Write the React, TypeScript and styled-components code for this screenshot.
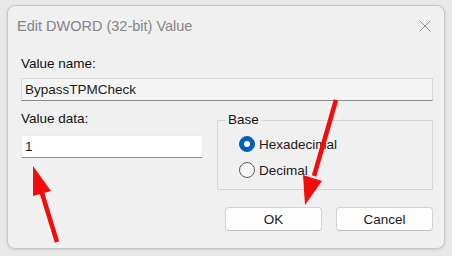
import React from "react";
import styled, { createGlobalStyle } from "styled-components";

const GlobalStyle = createGlobalStyle`
  html, body {
    margin: 0;
    padding: 0;
    background: #e8e8e8;
  }
  body {
    font-family: "Liberation Sans", Arial, sans-serif;
    font-size: 13.5px;
    color: #1a1a1a;
  }
`;

const Screen = styled.div`
  position: relative;
  width: 452px;
  height: 256px;
  box-sizing: border-box;
  padding: 5px 7px 7px 7px;
  overflow: hidden;
`;

const Dialog = styled.div`
  width: 438px;
  height: 244px;
  box-sizing: border-box;
  border: 1px solid #c6c6c6;
  border-radius: 8px;
  background: #f0f0f0;
  box-shadow: 0 1px 3px rgba(0, 0, 0, 0.12);
  display: flex;
  flex-direction: column;
`;

const TitleBar = styled.div`
  height: 40px;
  display: flex;
  align-items: center;
  justify-content: space-between;
  padding: 0 13px 0 9px;
`;

const Title = styled.span`
  color: #858585;
  font-size: 14.5px;
`;

const CloseButton = styled.div`
  width: 12px;
  height: 12px;
  display: flex;
`;

const Body = styled.div`
  padding: 9px 11px 0 13px;
  display: flex;
  flex-direction: column;
`;

const Label = styled.div`
  line-height: 18px;
  color: #111;
`;

const TextField = styled.div<{ $readOnly?: boolean }>`
  height: 23px;
  box-sizing: border-box;
  margin-top: ${(p) => (p.$readOnly ? "5px" : "7px")};
  padding: 0 3px;
  display: flex;
  align-items: center;
  background: ${(p) => (p.$readOnly ? "#f4f4f4" : "#ffffff")};
  border: 1px solid ${(p) => (p.$readOnly ? "#dadada" : "#ececec")};
  border-bottom: 1px solid #8a8a8a;
  color: #1b1b1b;
`;

const Row = styled.div`
  margin-top: 9px;
  display: grid;
  grid-template-columns: 182px 216px;
  column-gap: 14px;
`;

const Column = styled.div`
  display: flex;
  flex-direction: column;
`;

const GroupBox = styled.fieldset`
  margin: 2px 0 0 0;
  padding: 7px 0 0 21px;
  height: 78px;
  box-sizing: border-box;
  border: 1px solid #d6d6d6;
  border-radius: 1px;
  display: flex;
  flex-direction: column;
  gap: 8px;
`;

const Legend = styled.legend`
  padding: 0 2px;
  margin-left: -13px;
  line-height: 16px;
  color: #111;
`;

const RadioRow = styled.div`
  display: flex;
  align-items: center;
  gap: 4px;
  height: 18px;
`;

const RadioCircle = styled.span<{ $checked?: boolean }>`
  width: 16px;
  height: 16px;
  box-sizing: border-box;
  border-radius: 50%;
  display: flex;
  align-items: center;
  justify-content: center;
  background: ${(p) => (p.$checked ? "#005fb8" : "#f6f6f6")};
  border: 1px solid ${(p) => (p.$checked ? "#005fb8" : "#5c5c5c")};
`;

const RadioDot = styled.span`
  width: 6px;
  height: 6px;
  border-radius: 50%;
  background: #ffffff;
`;

const ButtonBar = styled.div`
  margin-top: 17px;
  display: flex;
  justify-content: flex-end;
  gap: 14px;
`;

const Button = styled.div`
  width: 97px;
  height: 24px;
  box-sizing: border-box;
  border: 1px solid #d3d3d3;
  border-bottom-color: #bcbcbc;
  border-radius: 4px;
  background: #fdfdfd;
  display: flex;
  align-items: center;
  justify-content: center;
  color: #1b1b1b;
`;

const Overlay = styled.svg`
  position: absolute;
  left: 0;
  top: 0;
  pointer-events: none;
`;

const Radio: React.FC<{ checked?: boolean; label: string }> = ({ checked, label }) => (
  <RadioRow>
    <RadioCircle $checked={checked}>{checked && <RadioDot />}</RadioCircle>
    <span>{label}</span>
  </RadioRow>
);

const App: React.FC = () => {
  return (
    <>
      <GlobalStyle />
      <Screen>
        <Dialog>
          <TitleBar>
            <Title>Edit DWORD (32-bit) Value</Title>
            <CloseButton>
              <svg width="12" height="12" viewBox="0 0 12 12">
                <path d="M0.5 0.5 L11.5 11.5 M11.5 0.5 L0.5 11.5" stroke="#8c8c8c" strokeWidth="1" />
              </svg>
            </CloseButton>
          </TitleBar>
          <Body>
            <Label>Value name:</Label>
            <TextField $readOnly>BypassTPMCheck</TextField>
            <Row>
              <Column>
                <Label>Value data:</Label>
                <TextField>1</TextField>
              </Column>
              <GroupBox>
                <Legend>Base</Legend>
                <Radio checked label="Hexadecimal" />
                <Radio label="Decimal" />
              </GroupBox>
            </Row>
            <ButtonBar>
              <Button>OK</Button>
              <Button>Cancel</Button>
            </ButtonBar>
          </Body>
        </Dialog>
        <Overlay width="452" height="256" viewBox="0 0 452 256">
          <line x1="57" y1="242" x2="41" y2="190" stroke="#f40b0b" strokeWidth="4.5" />
          <polygon points="33,166 33,196 51,191" fill="#f40b0b" />
          <line x1="336" y1="100" x2="314" y2="176" stroke="#f40b0b" strokeWidth="4.5" />
          <polygon points="305,205 303,175 322,181" fill="#f40b0b" />
        </Overlay>
      </Screen>
    </>
  );
};

export default App;
